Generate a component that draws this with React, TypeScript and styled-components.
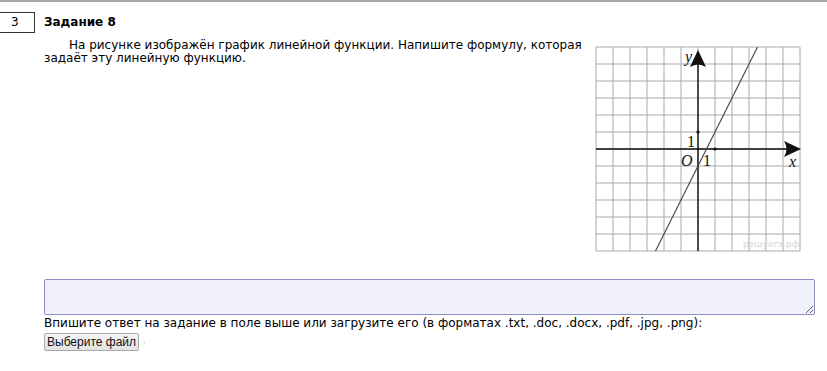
import React from 'react';
import styled, { createGlobalStyle } from 'styled-components';

const GlobalStyle = createGlobalStyle`
  html, body {
    margin: 0;
    padding: 0;
    background: #fff;
  }
  body {
    font-family: "DejaVu Sans", Verdana, sans-serif;
    font-size: 12px;
    color: #000;
  }
`;

const CELL = 17;
const OX = 103;
const OY = 104;

const toX = (u: number) => OX + u * CELL;
const toY = (v: number) => OY - v * CELL;

const Graph = () => {
  const lines = [];
  for (let i = -6; i <= 6; i++) {
    lines.push(<line key={'v' + i} x1={toX(i)} y1={toY(6)} x2={toX(i)} y2={toY(-6)} />);
    lines.push(<line key={'h' + i} x1={toX(-6)} y1={toY(i)} x2={toX(6)} y2={toY(i)} />);
  }

  return (
    <svg width="208" height="210" viewBox="0 0 208 210">
      <g stroke="#a9a9a9" strokeWidth="1">{lines}</g>
      <g stroke="#111" strokeWidth="1.4">
        <line x1={toX(-6)} y1={OY} x2={200} y2={OY} />
        <line x1={OX} y1={toY(-6)} x2={OX} y2={10} />
      </g>
      <path d="M206 104 L189 96 Q194 104 189 112 Z" fill="#111" />
      <path d="M103 5 L95 22 Q103 17 111 22 Z" fill="#111" />
      <line x1={toX(-2.5)} y1={toY(-6)} x2={toX(3.5)} y2={toY(6)} stroke="#444" strokeWidth="1.1" />
      <circle cx={toX(0)} cy={toY(1)} r="1.6" fill="#111" />
      <circle cx={toX(1)} cy={toY(0)} r="1.6" fill="#111" />
      <g fontFamily='"Liberation Serif", serif' fontSize="16" fill="#111">
        <text x="90" y="17" fontStyle="italic">y</text>
        <text x="194" y="122" fontStyle="italic">x</text>
        <text x="86" y="121" fontStyle="italic">O</text>
        <text x="92" y="102">1</text>
        <text x="108" y="121">1</text>
      </g>
      <text x="148" y="202" fontFamily='"DejaVu Sans", sans-serif' fontSize="9" fill="#d4d4d4">решуегэ.рф</text>
    </svg>
  );
};

const App = () => {
  return (
    <Page>
      <GlobalStyle />
      <Task>
        <NumberBox>3</NumberBox>
        <Body>
          <Title>Задание 8</Title>
          <Content>
            <Figure>
              <Graph />
            </Figure>
            <Paragraph>
              На рисунке изображён график линейной функции. Напишите формулу, которая задаёт эту линейную функцию.
            </Paragraph>
          </Content>
          <Answer />
          <Hint>Впишите ответ на задание в поле выше или загрузите его (в форматах .txt, .doc, .docx, .pdf, .jpg, .png):</Hint>
          <FileRow>
            <FileButton type="button">Выберите файл</FileButton>
            <FileStatus>·</FileStatus>
          </FileRow>
        </Body>
      </Task>
    </Page>
  );
};

export default App;

const Page = styled.div`
  width: 827px;
  height: 371px;
  border-top: 2px solid #a8a8a8;
  box-sizing: border-box;
  overflow: hidden;
`;

const Task = styled.div`
  display: flex;
  align-items: flex-start;
  padding-top: 10px;
`;

const NumberBox = styled.div`
  width: 34px;
  height: 19px;
  border: 1px solid #333;
  border-left: none;
  font-size: 12px;
  line-height: 19px;
  text-indent: 11px;
  margin-right: 9px;
  flex-shrink: 0;
`;

const Body = styled.div`
  width: 771px;
`;

const Title = styled.div`
  font-weight: bold;
  font-size: 12px;
  line-height: 20px;
`;

const Content = styled.div`
  display: flow-root;
  height: 247px;
`;

const Paragraph = styled.p`
  margin: 7px 0 0;
  text-indent: 25px;
  line-height: 13px;
  width: 545px;
`;

const Figure = styled.div`
  float: right;
  margin: 13px 12px 0 8px;
  width: 208px;
  height: 210px;
`;

const Answer = styled.textarea`
  display: block;
  width: 771px;
  height: 36px;
  box-sizing: border-box;
  border: 1px solid #8b8fc4;
  border-radius: 2px;
  background: #f1f1fb;
  margin: 0;
  resize: both;
`;

const Hint = styled.div`
  margin-top: 0;
  line-height: 16px;
`;

const FileRow = styled.div`
  display: flex;
  align-items: center;
  margin-top: 2px;
`;

const FileButton = styled.button`
  font-family: "Liberation Sans", Arial, sans-serif;
  font-size: 12px;
  height: 18px;
  padding: 0 2px;
  border: 1px solid #a9a9a9;
  border-radius: 2px;
  background: linear-gradient(#f6f6f6, #e2e2e2);
  color: #111;
`;

const FileStatus = styled.span`
  margin-left: 4px;
  color: #bbb;
  font-size: 10px;
`;
